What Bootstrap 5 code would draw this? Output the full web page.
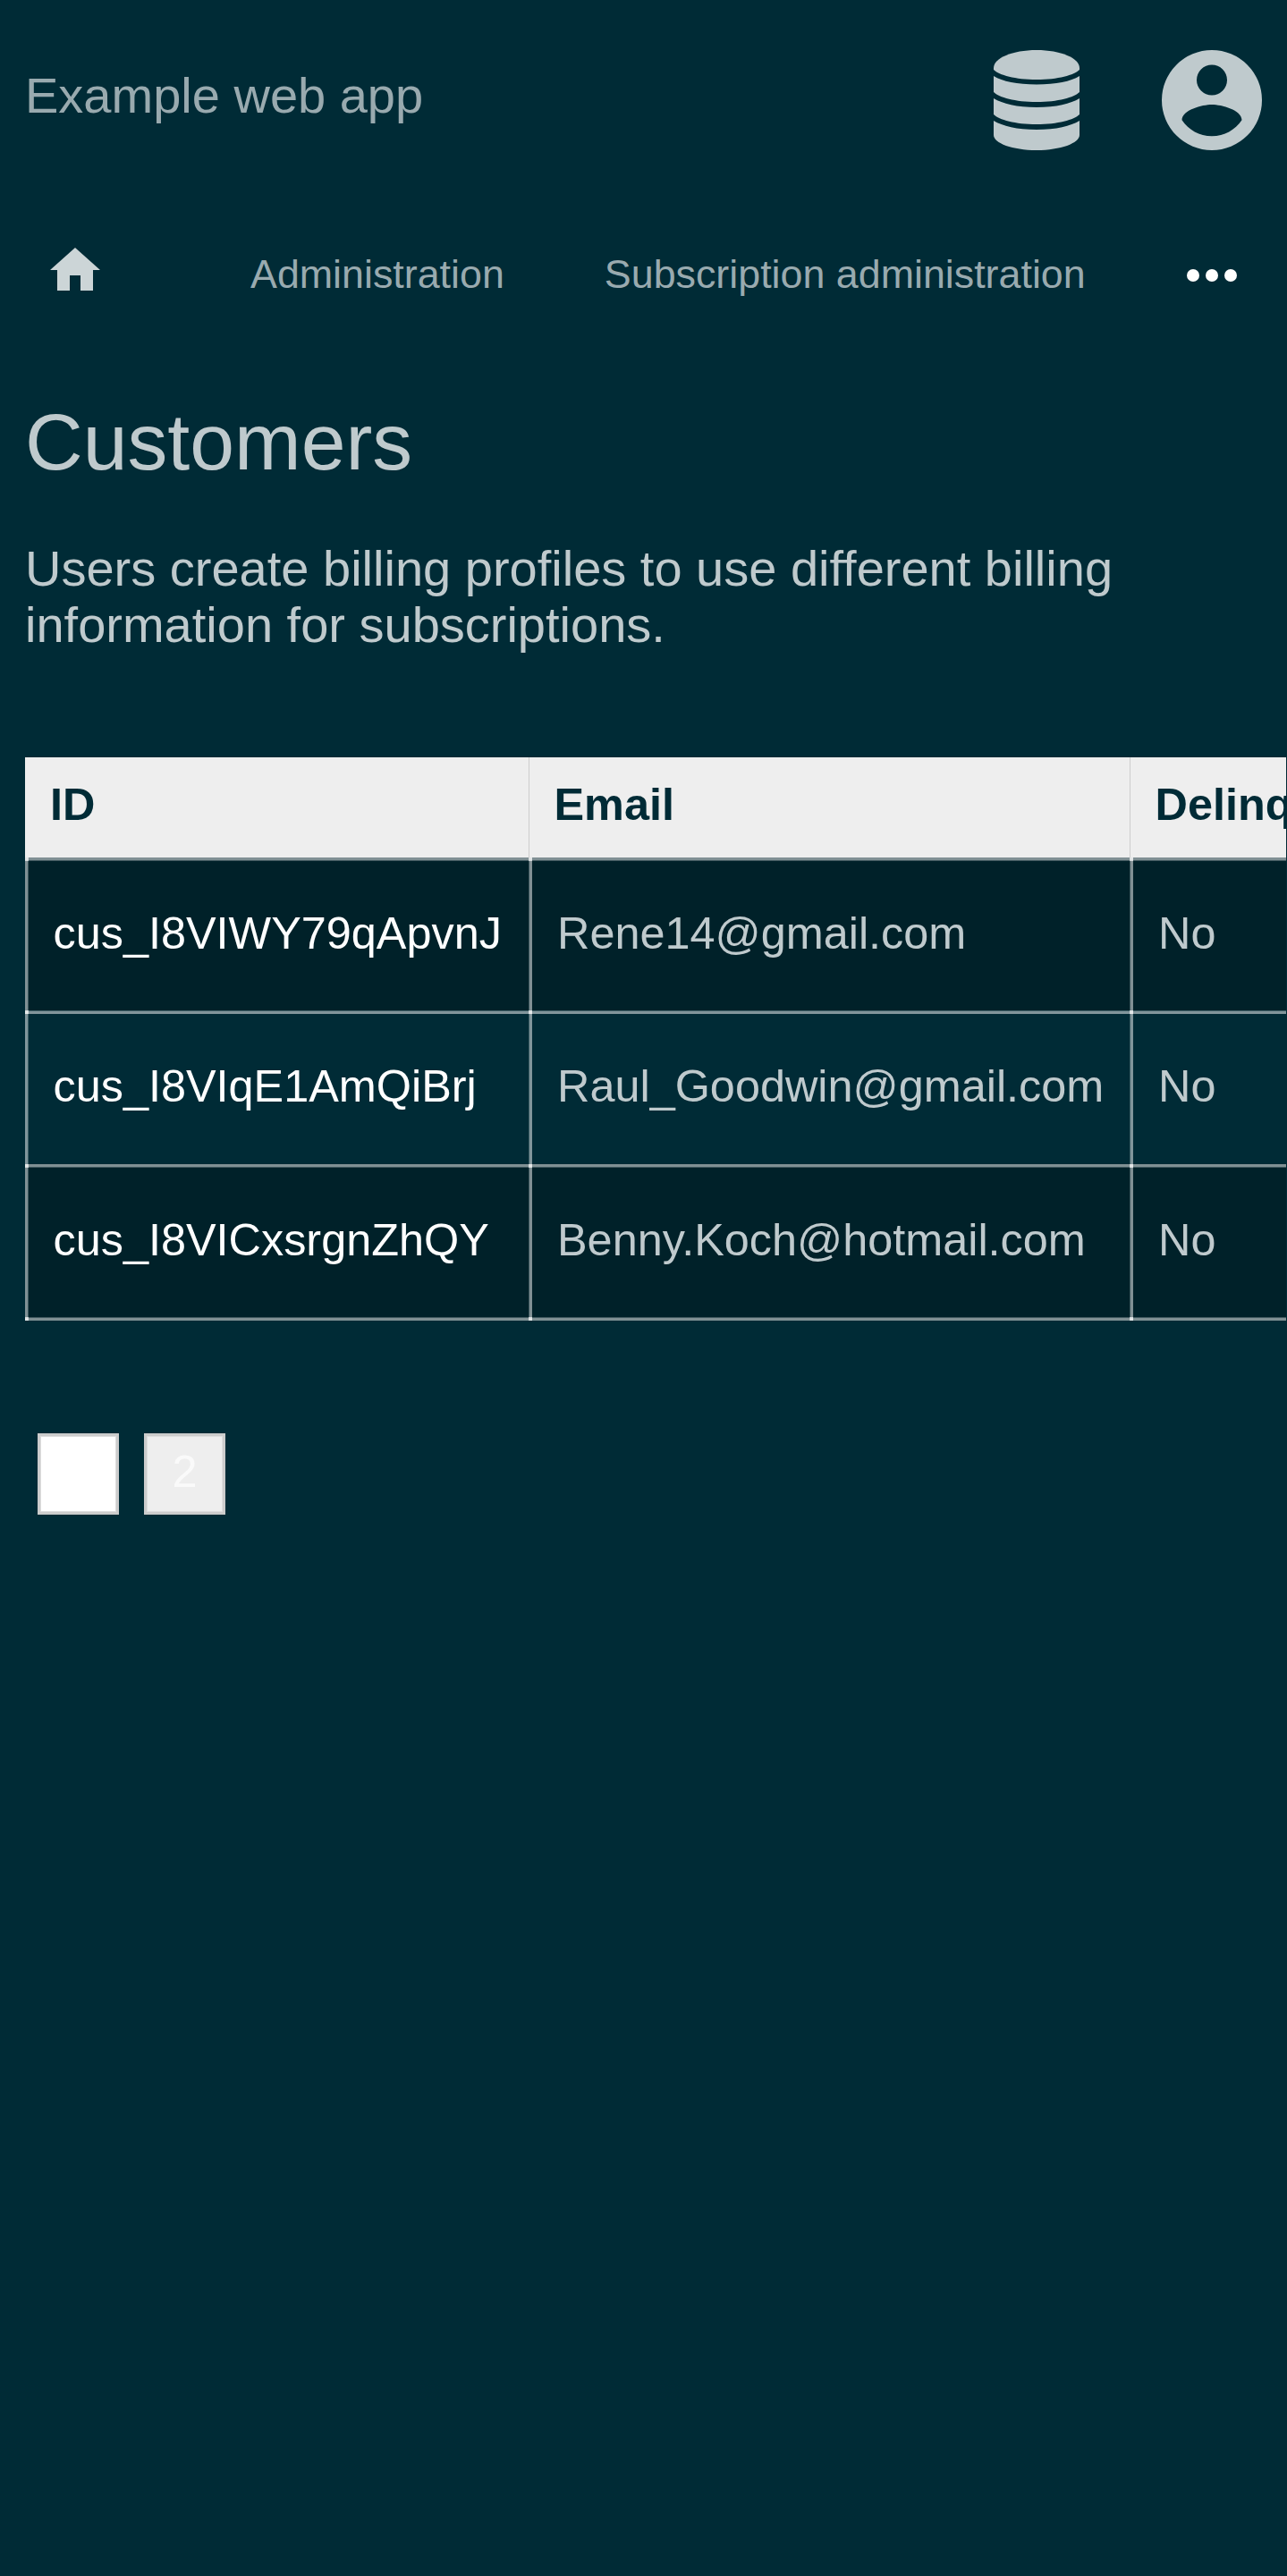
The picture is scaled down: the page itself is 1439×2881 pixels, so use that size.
<!DOCTYPE html>
<html lang="en">
<head>
<meta charset="utf-8">
<title>Customers</title>
<link href="https://cdn.jsdelivr.net/npm/bootstrap@5.3.0/dist/css/bootstrap.min.css" rel="stylesheet">
<style>
html,body{overflow:hidden}
body{background:#002b36;color:#bfcacd;font-family:"Liberation Sans",Arial,sans-serif;font-size:56px;line-height:63px;height:2881px}
a{text-decoration:none;color:#99aaaf}
.topbar{height:224px;padding:0 28px}
.brand{padding-top:2px;margin-top:-13px}
.tools{gap:84px;height:112px}
.tools svg{width:112px;height:112px}
.menu{height:168px;font-size:44.8px;line-height:52px;padding:0 56px}
.menu .entry{margin-top:-5px}
.menu .home{width:56px;height:48px;margin-right:168px;margin-top:-14px}
.menu .sub{margin-left:112px}
.menu .dots{margin-left:auto;width:56px;height:14px}
main{padding-left:28px}
h1.title{font-size:89.6px;line-height:103px;margin:0;padding-top:51px;font-weight:400}
.intro{width:1300px;margin:58px 0 0}
.sheet{width:1410px;margin-top:117px;overflow:hidden;font-size:50.4px;line-height:56px}
.sheet table{width:1680px;table-layout:fixed;border-collapse:separate;border-spacing:0}
.sheet th{height:112px;padding:0 28px 6px;background:#eee;color:#002b36;vertical-align:middle}
.sheet th+th{border-left:1px solid #cdcdcd;padding-left:27.5px}
/* translucent grid lines: half-strength pixel on one side, brighter where they cross */
.sheet td{--v:linear-gradient(90deg,#ffffff40 1px,#ffffff80 1px);--h:linear-gradient(#ffffff80 3px,#ffffff40 3px);--x:linear-gradient(#ffffff90,#ffffff90);--fill:#002129;
height:171px;padding:0 28px 2px 32px;vertical-align:middle;white-space:nowrap;
background:var(--x) 0 0/4px 4px no-repeat,var(--v) 0 0/4px 100% no-repeat,var(--h) 0 0/100% 4px no-repeat,var(--fill)}
.sheet td:first-child{padding-left:31.5px;--v:linear-gradient(90deg,#ffffff80 3px,#ffffff40 3px)}
.sheet .even td{height:172px;padding-bottom:3px;--fill:#002b36;--h:linear-gradient(#ffffff40 1px,#ffffff80 1px)}
.sheet td a{color:#fff}
.sheet .last td{height:175px;padding-bottom:6px;
background:var(--x) 0 0/4px 4px no-repeat,var(--x) 0 100%/4px 4px no-repeat,var(--v) 0 0/4px 100% no-repeat,var(--h) 0 0/100% 4px no-repeat,linear-gradient(#ffffff40 1px,#ffffff80 1px) 0 100%/100% 4px no-repeat,var(--fill)}
.pages{margin:126px 0 0 14px;gap:28px;font-size:50.4px}
.pages a{width:91px;height:91px;border:3px solid #ccc;box-shadow:inset 0 0 0 1px #ddd;background:#eee;color:#fafafa;line-height:79px;text-align:center}
.pages .current{background:#fff;color:#fff}
</style>
<script src="https://cdn.jsdelivr.net/npm/bootstrap@5.3.0/dist/js/bootstrap.bundle.min.js"></script>
</head>
<body>
<header class="topbar d-flex align-items-center justify-content-between">
<a class="brand" href="#">Example web app</a>
<div class="tools d-flex">
<svg viewBox="0 0 112 112" fill="#bfcacd"><path d="M8 20C8 9 29 0 56 0s48 9 48 20v2C98 28 80 33 56 33S14 28 8 22Z"/><path d="M8 29C18 35 34 38.500 56 38.500S94 35 104 29V47C98 53 80 58 56 58S14 53 8 47Z"/><path d="M8 54C18 60 34 64 56 64S94 60 104 54V72C98 78 80 83 56 83S14 78 8 72Z"/><path d="M8 79C18 85 34 89 56 89S94 85 104 79V95C104 104 83 112 56 112S8 104 8 95Z"/></svg>
<svg viewBox="0 0 112 112" fill="#bfcacd"><path fill-rule="evenodd" d="M56 0a56 56 0 1 0 0 112A56 56 0 1 0 56 0ZM56 16.500a17 17 0 1 1 0 34 17 17 0 1 1 0-34ZM56 96.300c-14 0-26-7-33.500-18C22.700 67 45 61 56 61s33.300 6 33.500 17.300c-7.500 11-19.500 18-33.500 18Z"/></svg>
</div>
</header>
<nav class="menu d-flex align-items-center">
<a class="home d-flex" href="#"><svg width="56" height="48" viewBox="0 0 56 48" fill="#ccd5d7"><path d="M22 48V31h12v17h14V25h8L28 0 0 25h8v23Z"/></svg></a>
<a class="entry" href="#">Administration</a>
<a class="entry sub" href="#">Subscription administration</a>
<a class="dots d-flex" href="#"><svg width="56" height="14" viewBox="0 0 56 14" fill="#fff"><circle cx="7" cy="7" r="7"/><circle cx="28" cy="7" r="7"/><circle cx="49" cy="7" r="7"/></svg></a>
</nav>
<main>
<h1 class="title">Customers</h1>
<p class="intro">Users create billing profiles to use different billing information for subscriptions.</p>
<div class="sheet">
<table>
<colgroup><col style="width:563px"><col style="width:672px"><col></colgroup>
<thead><tr><th>ID</th><th>Email</th><th>Delinquent</th></tr></thead>
<tbody>
<tr><td><a href="#">cus_I8VIWY79qApvnJ</a></td><td>Rene14@gmail.com</td><td>No</td></tr>
<tr class="even"><td><a href="#">cus_I8VIqE1AmQiBrj</a></td><td>Raul_Goodwin@gmail.com</td><td>No</td></tr>
<tr class="last"><td><a href="#">cus_I8VICxsrgnZhQY</a></td><td>Benny.Koch@hotmail.com</td><td>No</td></tr>
</tbody>
</table>
</div>
<div class="pages d-flex"><a class="current" href="#">1</a><a href="#">2</a></div>
</main>
</body>
</html>
